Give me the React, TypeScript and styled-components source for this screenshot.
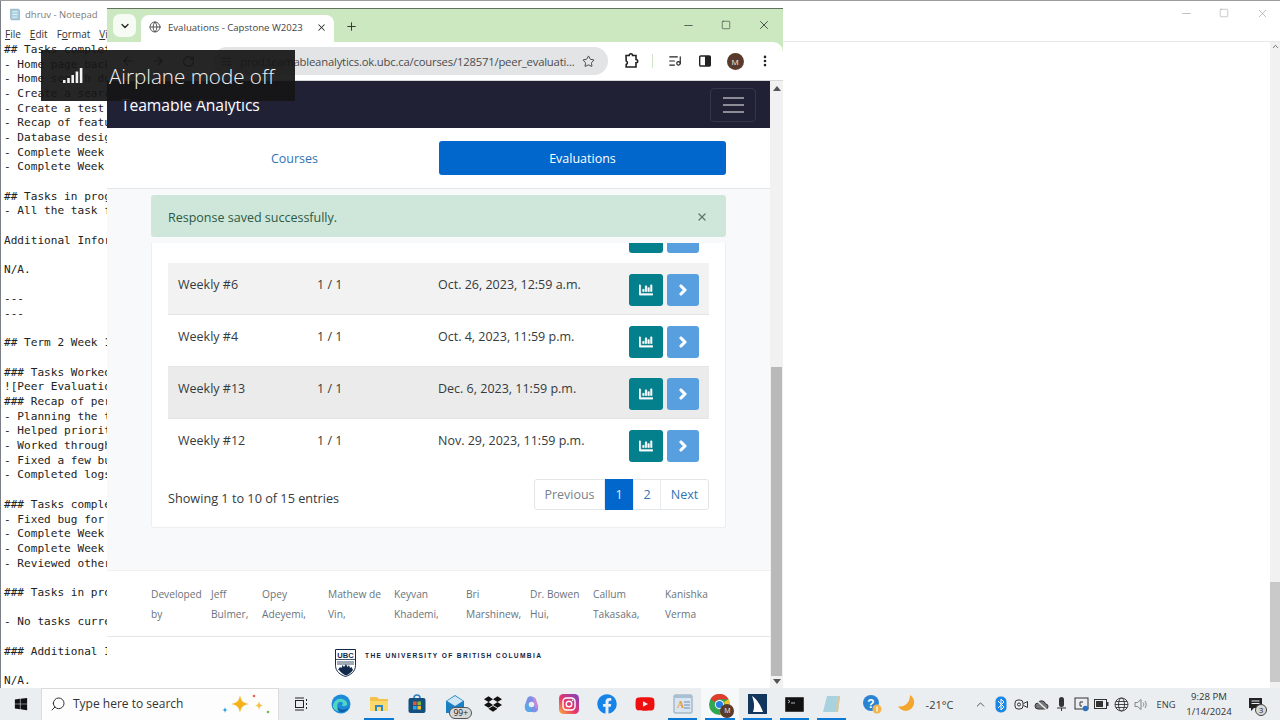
import styled, { createGlobalStyle } from "styled-components"
import { ChevronDown, X, Plus, Minus, Square, ArrowLeft, ArrowRight, RotateCw, Star, Globe, ListMusic, EllipsisVertical, SlidersHorizontal, Search, ChevronUp } from "lucide-react"
import { FaChartBar, FaChevronRight, FaWindows, FaDropbox, FaFacebook, FaYoutube } from "react-icons/fa"

const GlobalStyle = createGlobalStyle`
  html, body { margin: 0; padding: 0; background: #fff; }
  * { box-sizing: border-box; }
`

const Desktop = styled.div`
  position: relative;
  width: 1280px;
  height: 720px;
  overflow: hidden;
  background: #fff;
  border-top: 1px solid #9c9c9c;
  font-family: "Open Sans", "Noto Sans", sans-serif;
  display: flex;
  flex-direction: column;
`

const Windows = styled.div`
  position: relative;
  flex: 1;
`

/* notepad behind the browser */
const Notepad = styled.div`
  position: absolute;
  left: 0;
  top: 0;
  width: 130px;
  height: 687px;
  background: #fff;
  border-left: 1px solid #7a7f85;
  overflow: hidden;
`

const NoteTitle = styled.div`
  height: 26px;
  display: flex;
  align-items: center;
  gap: 3px;
  padding-left: 7px;
  font-size: 9.5px;
  color: #7b7b7b;
`

const NoteMenu = styled.div`
  height: 15px;
  display: flex;
  gap: 9px;
  padding-left: 4px;
  font-size: 10px;
  line-height: 15px;
  color: #333;
  u { text-decoration: underline; }
`

const NoteText = styled.pre`
  margin: 0;
  padding: 1px 0 0 3px;
  font-family: "DejaVu Sans Mono", monospace;
  font-size: 11.1px;
  line-height: 14.67px;
  color: #222;
`

const BlankWindow = styled.div`
  position: absolute;
  left: 783px;
  right: 0;
  top: 0;
  height: 687px;
  display: flex;
  flex-direction: column;
`

const BlankTop = styled.div`
  height: 41px;
  display: flex;
  justify-content: flex-end;
  align-items: flex-start;
  border-bottom: 1px solid #e8e8e8;
  color: #8a8a8a;
`

const BlankControls = styled.div`
  display: flex;
  margin-right: -1px;
`

const WinControl = styled.div<{ $w: number }>`
  width: ${(p) => p.$w}px;
  height: 24px;
  display: flex;
  align-items: center;
  justify-content: center;
  color: inherit;
`

const BlankBody = styled.div`
  flex: 1;
  display: flex;
  justify-content: flex-end;
`

const BlankTrack = styled.div`
  width: 10px;
  background: #f1f1f1;
  display: flex;
  flex-direction: column;
  justify-content: space-between;
  align-items: center;
`

const BlankThumb = styled.div`
  width: 10px;
  height: 100px;
  background: #c9c9c9;
  margin-bottom: 6px;
`

const Browser = styled.div`
  position: absolute;
  left: 107px;
  top: 7px;
  width: 676px;
  height: 680px;
  display: flex;
  flex-direction: column;
  border-top: 1px solid #66705f;
  background: #cbe8c0;
`

const TabStrip = styled.div`
  height: 33px;
  background: #cbe8c0;
  display: flex;
  align-items: flex-end;
  flex-shrink: 0;
`

const TabSearch = styled.div`
  width: 23px;
  height: 23px;
  margin: 0 5px 5px 6px;
  border-radius: 7px;
  background: #f6fbf3;
  display: flex;
  align-items: center;
  justify-content: center;
  color: #222;
`

const Tab = styled.div`
  width: 193px;
  height: 27px;
  background: #fff;
  border-radius: 8px 8px 0 0;
  display: flex;
  align-items: center;
  padding: 0 7px 3px 8px;
  gap: 7px;
  color: #444;
`

const TabTitle = styled.span`
  flex: 1;
  font-size: 9.6px;
  white-space: nowrap;
  color: #444;
`

const NewTab = styled.div`
  width: 34px;
  height: 27px;
  display: flex;
  align-items: center;
  justify-content: center;
  color: #333;
  padding-bottom: 5px;
`

const TabSpacer = styled.div`
  flex: 1;
`

const StripControls = styled.div`
  display: flex;
  margin-bottom: 5px;
  color: #222;
`

const Toolbar = styled.div`
  height: 39px;
  background: #fff;
  border-radius: 0 10px 0 0;
  display: flex;
  align-items: center;
  padding-left: 6px;
  border-bottom: 1px solid #d8d8d8;
  flex-shrink: 0;
  color: #555;
`

const NavIcon = styled.div<{ $w?: number }>`
  width: ${(p) => p.$w ?? 30}px;
  display: flex;
  justify-content: center;
  align-items: center;
  flex-shrink: 0;
  color: #333;
`

const Omnibox = styled.div`
  width: 395px;
  height: 28px;
  flex-shrink: 0;
  margin-left: 10px;
  border-radius: 14px;
  background: #e3e4e6;
  display: flex;
  align-items: center;
  padding: 0 13px 0 8px;
  color: #444;
`

const Url = styled.span`
  flex: 1;
  font-size: 11.3px;
  letter-spacing: -0.2px;
  white-space: nowrap;
  color: #4c4c4c;
  padding-left: 8px;
`

const Divider = styled.div`
  width: 1px;
  height: 14px;
  background: #cfe4c8;
  margin: 0 10px 0 -2px;
`

const Avatar = styled.div`
  width: 17px;
  height: 17px;
  border-radius: 50%;
  background: #5b3a2e;
  color: #eee;
  font-size: 8px;
  display: flex;
  align-items: center;
  justify-content: center;
`

const ChromeBadge = styled(Avatar)`
  position: absolute;
  right: -4px;
  bottom: -3px;
  width: 14px;
  height: 14px;
  font-size: 7px;
`

const ChromeWrap = styled.span`
  position: relative;
  display: flex;
`

const PageArea = styled.div`
  flex: 1;
  display: flex;
  min-height: 0;
  background: #fff;
`

const Page = styled.div`
  flex: 1;
  display: flex;
  flex-direction: column;
  min-width: 0;
  color: #343a40;
`

const Navbar = styled.div`
  height: 47px;
  background: #212136;
  flex-shrink: 0;
  display: flex;
  align-items: center;
  justify-content: space-between;
  padding: 0 14px;
`

const Brand = styled.div`
  font-size: 15.7px;
  color: #fff;
  letter-spacing: -0.1px;
`

const Toggler = styled.div`
  width: 46px;
  height: 34px;
  border: 1px solid #36364a;
  border-radius: 4px;
  display: flex;
  flex-direction: column;
  align-items: center;
  justify-content: center;
  gap: 5px;
`

const TogglerBar = styled.div`
  width: 21px;
  height: 2px;
  background: #8c8c97;
`

const NavTabs = styled.div`
  height: 61px;
  flex-shrink: 0;
  background: #fff;
  border-bottom: 1px solid #e5e5e5;
  display: flex;
  align-items: center;
  padding: 0 44px 1px 44px;
  gap: 1px;
`

const NavLink = styled.div<{ $active?: boolean }>`
  width: 287px;
  height: 34px;
  padding-top: 2px;
  border-radius: 3px;
  display: flex;
  align-items: center;
  justify-content: center;
  font-size: 12.5px;
  color: ${(p) => (p.$active ? "#fff" : "#2f74b5")};
  background: ${(p) => (p.$active ? "#0267cc" : "transparent")};
`

const Main = styled.div`
  flex: 1;
  min-height: 0;
  background: #f8f9fa;
  padding: 6px 44px 0 44px;
  display: flex;
  flex-direction: column;
`

const Alert = styled.div`
  height: 42px;
  flex-shrink: 0;
  background: #cfe6da;
  border-radius: 3px;
  display: flex;
  align-items: center;
  justify-content: space-between;
  padding: 2px 18px 0 17px;
  font-size: 12.5px;
  color: #2c5a45;
`

const AlertClose = styled.div`
  display: flex;
  color: #5d7a6c;
`

const Card = styled.div`
  margin-top: 6px;
  height: 285px;
  background: #fff;
  border: 1px solid #eeeeee;
  border-top: none;
  border-radius: 0 0 3px 3px;
  padding: 0 16px;
  display: flex;
  flex-direction: column;
`

const ClippedRow = styled.div`
  height: 20px;
  flex-shrink: 0;
  overflow: hidden;
  display: flex;
  justify-content: flex-end;
  padding-right: 10px;
  gap: 4px;
  align-items: flex-end;
  padding-bottom: 10px;
`

const Row = styled.div<{ $shade?: string; $last?: boolean }>`
  height: 52px;
  flex-shrink: 0;
  display: grid;
  grid-template-columns: 139px 121px 1fr auto;
  align-items: start;
  padding: 11px 10px 0 10px;
  background: ${(p) => p.$shade ?? "#fff"};
  border-bottom: 1px solid ${(p) => (p.$last ? "transparent" : "#e4e4e4")};
  font-size: 12.5px;
  line-height: 20px;
`

const Cell = styled.span`
  padding-top: 1px;
`

const RowButtons = styled.div`
  display: flex;
  gap: 4px;
`

const IconButton = styled.div<{ $kind: "chart" | "go" }>`
  width: ${(p) => (p.$kind === "chart" ? 34 : 32)}px;
  height: 32px;
  flex-shrink: 0;
  border-radius: 3px;
  background: ${(p) => (p.$kind === "chart" ? "#047f8c" : "#589fe0")};
  color: #fff;
  display: flex;
  align-items: center;
  justify-content: center;
`

const CardFoot = styled.div`
  flex: 1;
  display: flex;
  justify-content: space-between;
  align-items: flex-start;
  padding-top: 8px;
`

const Showing = styled.div`
  font-size: 12.7px;
  line-height: 20px;
  padding-top: 9px;
`

const Pager = styled.div`
  display: flex;
  height: 31px;
  border: 1px solid #e3e6e9;
  border-radius: 3px;
  font-size: 12.5px;
`

const PageItem = styled.div<{ $w: number; $active?: boolean; $muted?: boolean }>`
  width: ${(p) => p.$w}px;
  display: flex;
  align-items: center;
  justify-content: center;
  border-left: 1px solid #e9ecef;
  margin-top: ${(p) => (p.$active ? "-1px" : "0")};
  margin-bottom: ${(p) => (p.$active ? "-1px" : "0")};
  color: ${(p) => (p.$active ? "#e8f0fa" : p.$muted ? "#7a8188" : "#2f74b5")};
  background: ${(p) => (p.$active ? "#0267cc" : "transparent")};
  &:first-child { border-left: none; }
`

const Footer = styled.div`
  height: 118px;
  flex-shrink: 0;
  background: #fff;
  border-top: 1px solid #f0f0f0;
  display: flex;
  flex-direction: column;
`

const Credits = styled.div`
  height: 66px;
  flex-shrink: 0;
  border-bottom: 1px solid #e6e6e6;
  padding: 13px 0 0 44px;
  display: grid;
  grid-template-columns: 60px 51px 66px 66px 72px 64px 63px 72px 72px;
  font-size: 10.2px;
  line-height: 20px;
  color: #6a737b;
`

const UbcRow = styled.div`
  display: flex;
  align-items: flex-start;
  padding: 12px 0 0 228px;
  gap: 9px;
`

const UbcName = styled.div`
  font-family: "Liberation Sans", sans-serif;
  font-size: 6.6px;
  line-height: 11px;
  padding-top: 1px;
  font-weight: 700;
  letter-spacing: 1.36px;
  color: #14233f;
  white-space: nowrap;
`

const ScrollBar = styled.div`
  width: 13px;
  flex-shrink: 0;
  background: #f1f1f1;
  display: flex;
  flex-direction: column;
  align-items: center;
`

const ScrollArrow = styled.div<{ $down?: boolean }>`
  width: 0;
  height: 0;
  border-left: 4px solid transparent;
  border-right: 4px solid transparent;
  ${(p) => (p.$down ? "border-top: 5px solid #555;" : "border-bottom: 5px solid #555;")}
  margin: ${(p) => (p.$down ? "3px 0 0" : "5px 0 0")};
`

const ScrollThumb = styled.div`
  width: 11px;
  height: 309px;
  margin-top: 276px;
  background: #b9b9b9;
`

/* airplane mode flyout, sits over the windows */
const Flyout = styled.div`
  position: absolute;
  left: 41px;
  top: 49px;
  width: 254px;
  height: 51px;
  background: rgba(22, 22, 22, 0.93);
  display: flex;
  align-items: center;
  gap: 26px;
  padding-left: 22px;
  color: #f2f2f2;
  font-size: 20.6px;
  font-weight: 300;
`

const Taskbar = styled.div`
  height: 32px;
  flex-shrink: 0;
  background: #eaeef1;
  display: flex;
  align-items: stretch;
`

const StartButton = styled.div`
  width: 41px;
  display: flex;
  align-items: center;
  justify-content: center;
  color: #111;
`

const SearchBox = styled.div`
  width: 238px;
  padding: 0 0 2px 8px;
  background: #fdfdfd;
  border: 1px solid #dcdcdc;
  border-bottom: none;
  display: flex;
  align-items: center;
  gap: 7px;
  font-size: 12px;
  color: #333;
  position: relative;
`

const Sparkles = styled.svg`
  position: absolute;
  right: 8px;
  top: 4px;
`

const TaskSlot = styled.div<{ $w?: number; $running?: boolean; $active?: boolean }>`
  width: ${(p) => p.$w ?? 38}px;
  flex-shrink: 0;
  position: relative;
  display: flex;
  align-items: center;
  justify-content: center;
  background: ${(p) => (p.$active ? "#f6f8f9" : "transparent")};
  &::after {
    content: "";
    display: ${(p) => (p.$running ? "block" : "none")};
    position: absolute;
    left: 4px;
    right: 4px;
    bottom: 0;
    height: 2px;
    background: #0a78d4;
  }
`

const Badge = styled.span`
  position: absolute;
  right: 2px;
  bottom: 1px;
  height: 12px;
  padding: 0 3px;
  border-radius: 6px;
  background: #d8d8d8;
  border: 1px solid #555;
  font-size: 8.5px;
  line-height: 10px;
  color: #222;
`

const Tray = styled.div`
  margin-left: auto;
  display: flex;
  align-items: stretch;
  color: #333;
`

const TrayText = styled.div<{ $w: number; $size?: number; $after?: number }>`
  width: ${(p) => p.$w}px;
  margin-right: ${(p) => p.$after ?? 0}px;
  display: flex;
  align-items: center;
  justify-content: center;
  font-size: ${(p) => p.$size ?? 11}px;
  color: #3a3a3a;
  white-space: nowrap;
`

const Clock = styled.div`
  width: 56px;
  margin-right: 3px;
  display: flex;
  flex-direction: column;
  align-items: center;
  justify-content: center;
  font-size: 9.6px;
  line-height: 15px;
  color: #333;
`

const NotifyCount = styled.span`
  position: absolute;
  left: 15px;
  bottom: 4px;
  width: 12px;
  height: 12px;
  border-radius: 50%;
  background: #d8d8d8;
  border: 1px solid #444;
  font-size: 8px;
  line-height: 10px;
  text-align: center;
  color: #222;
`

const noteLines = [
  "## Tasks completed",
  "- Home page backend",
  "- Home search done",
  "- Create a search",
  "- Create a test",
  "- Recap of features",
  "- Database design",
  "- Complete Week 1",
  "- Complete Week 2",
  "",
  "## Tasks in progress",
  "- All the task for",
  "",
  "Additional Information",
  "",
  "N/A.",
  "",
  "---",
  "---",
  "",
  "## Term 2 Week 1",
  "",
  "### Tasks Worked",
  "![Peer Evaluation",
  "### Recap of period",
  "- Planning the tasks",
  "- Helped prioritize",
  "- Worked through",
  "- Fixed a few bugs",
  "- Completed logs",
  "",
  "### Tasks completed",
  "- Fixed bug for",
  "- Complete Week 1",
  "- Complete Week 2",
  "- Reviewed others",
  "",
  "### Tasks in progress",
  "",
  "- No tasks currently",
  "",
  "### Additional Info",
  "",
  "N/A.",
]

const rows = [
  { name: "Weekly #6", done: "1 / 1", due: "Oct. 26, 2023, 12:59 a.m.", shade: "#f2f2f2" },
  { name: "Weekly #4", done: "1 / 1", due: "Oct. 4, 2023, 11:59 p.m." },
  { name: "Weekly #13", done: "1 / 1", due: "Dec. 6, 2023, 11:59 p.m.", shade: "#ebebeb" },
  { name: "Weekly #12", done: "1 / 1", due: "Nov. 29, 2023, 11:59 p.m." },
]

const credits = ["Developed by", "Jeff Bulmer,", "Opey Adeyemi,", "Mathew de Vin,", "Keyvan Khademi,", "Bri Marshinew,", "Dr. Bowen Hui,", "Callum Takasaka,", "Kanishka Verma"]

function NotepadIcon() {
  return (
    <svg width="14" height="15" viewBox="0 0 16 16">
      <path d="M3 2h9l1 1v11H4l-1-1z" fill="#a9cfe0" stroke="#6f97a8" strokeWidth="0.7" />
      <path d="M5 5h6M5 8h6M5 11h5" stroke="#e9f4f8" strokeWidth="1" />
    </svg>
  )
}

function ExtensionIcon() {
  return (
    <svg width="16" height="16" viewBox="0 0 16 16" fill="none" stroke="#222" strokeWidth="1.6">
      <path d="M3 2.5h3.2a1.7 1.7 0 0 1 3.4 0H13v4a1.5 1.5 0 0 1 0 3.4V14H3.2v-2.6a1.8 1.8 0 0 0 0-3.4z" />
    </svg>
  )
}

function SidePanelIcon() {
  return (
    <svg width="14" height="14" viewBox="0 0 14 14">
      <rect x="1.7" y="2" width="10.6" height="10" rx="1" fill="#fff" stroke="#222" strokeWidth="1.4" />
      <rect x="7" y="2" width="5.3" height="10" fill="#222" />
    </svg>
  )
}

function SignalIcon() {
  return (
    <svg width="20" height="16" viewBox="0 0 20 16" fill="#f2f2f2">
      <rect x="0" y="12" width="2.6" height="3" />
      <rect x="4.2" y="10" width="2.6" height="5" />
      <rect x="8.4" y="7" width="2.6" height="8" />
      <rect x="12.6" y="3.5" width="2.6" height="11.5" />
      <rect x="16.8" y="0" width="2.6" height="15" />
    </svg>
  )
}

function UbcLogo() {
  return (
    <svg width="21" height="28" viewBox="0 0 21 28">
      <path d="M0.5 0.5h20v16c0 6-5 9.5-10 11c-5-1.500-10-5-10-11z" fill="#fff" stroke="#12294a" />
      <text x="10.5" y="8.5" textAnchor="middle" fontFamily="Liberation Sans" fontWeight="700" fontSize="7.6" fill="#12294a">UBC</text>
      <path d="M1 10.500h19M2 13h17M2 15h17" stroke="#12294a" strokeWidth="0.8" />
      <path d="M3 21l2-3 1.500 1 1-3 1.500 2 2-3 1.500 3 1.500-2 1 3 1.500-1 1.500 3c-2 3-5 4.500-7 5.500c-2-1-5-2.500-7-5.500z" fill="#12294a" />
    </svg>
  )
}

function TaskViewIcon() {
  return (
    <svg width="16" height="16" viewBox="0 0 16 16" fill="none" stroke="#222" strokeWidth="1">
      <rect x="2.5" y="4.5" width="8" height="7" />
      <path d="M2 2h9M2 14h9M13.5 3v2M13.500 7v2M13.500 11v2" />
    </svg>
  )
}

function EdgeIcon() {
  return (
    <svg width="20" height="20" viewBox="0 0 20 20">
      <circle cx="10" cy="10" r="9.5" fill="#1c8bd8" />
      <path d="M2 13c0-6 5-9 9-8c4 1 6 4 5 6c-1 1.500-5 1.500-5.500 0c3 0 1-4-2-3c-3 1-3 6 0 8.500c2 1.500-5 1-6.500-3.500z" fill="#50d6c0" />
      <path d="M18 13c-2 4-6 6-9 5c-2-1-3-3-2-5c1 3 7 4 11 0z" fill="#0f5ea8" />
    </svg>
  )
}

function FolderIcon() {
  return (
    <svg width="20" height="18" viewBox="0 0 20 18">
      <path d="M1 2h7l2 2h9v12H1z" fill="#f2c14e" />
      <path d="M1 6h18v10H1z" fill="#fbd96b" />
      <rect x="6" y="10" width="8" height="6" fill="#2f88c9" />
      <rect x="8" y="12" width="4" height="4" fill="#fbd96b" />
    </svg>
  )
}

function StoreIcon() {
  return (
    <svg width="18" height="20" viewBox="0 0 18 20">
      <path d="M6 4a3 3 0 0 1 6 0" fill="none" stroke="#2a7fbf" strokeWidth="1.5" />
      <rect x="0.5" y="4" width="17" height="15" rx="2" fill="#14507e" />
      <rect x="5" y="7.5" width="3.6" height="3.6" fill="#e8543a" />
      <rect x="9.4" y="7.5" width="3.6" height="3.6" fill="#7cbb3e" />
      <rect x="5" y="11.9" width="3.6" height="3.6" fill="#2aa5e8" />
      <rect x="9.4" y="11.9" width="3.6" height="3.6" fill="#f5bb27" />
    </svg>
  )
}

function MailIcon() {
  return (
    <svg width="22" height="20" viewBox="0 0 22 20">
      <path d="M2 7l9-6 9 6v12H2z" fill="#1a80c4" />
      <path d="M3 7l8 5 8-5-8-5z" fill="#cfe6f5" />
    </svg>
  )
}

function CopilotIcon() {
  return (
    <svg width="19" height="19" viewBox="0 0 18 18">
      <path d="M5 3c2-3 6-2 7 1l3 8c1 3-2 5-5 4H7C3 16 2 12 3 9z" fill="#7f8fe6" />
      <path d="M10 2c2 0 3 1 3.5 3l2 6c0 2-2 2-3 1z" fill="#c48ad8" />
      <path d="M4 8c2-1 3 0 4 3l1 5H6c-3-1-4-5-2-8z" fill="#5aa8e8" />
      <circle cx="9" cy="9" r="2.6" fill="#eaeef1" />
    </svg>
  )
}

function InstagramIcon() {
  return (
    <svg width="20" height="20" viewBox="0 0 20 20">
      <defs>
        <linearGradient id="insta" x1="0" y1="1" x2="1" y2="0">
          <stop offset="0" stopColor="#f9b13a" />
          <stop offset="0.45" stopColor="#e8356b" />
          <stop offset="1" stopColor="#7b3fc4" />
        </linearGradient>
      </defs>
      <rect width="20" height="20" rx="4.5" fill="url(#insta)" />
      <rect x="4" y="4" width="12" height="12" rx="3.5" fill="none" stroke="#fff" strokeWidth="1.4" />
      <circle cx="10" cy="10" r="2.8" fill="none" stroke="#fff" strokeWidth="1.4" />
      <circle cx="13.6" cy="6.4" r="0.8" fill="#fff" />
    </svg>
  )
}

function DocIcon() {
  return (
    <svg width="20" height="20" viewBox="0 0 20 20">
      <rect x="1" y="1" width="18" height="18" rx="1" fill="#d9e5f0" stroke="#8aa0b6" />
      <rect x="1" y="1" width="18" height="3" fill="#a9bfd4" />
      <text x="4" y="14" fontFamily="Liberation Serif" fontSize="10" fontWeight="700" fill="#e89a3c">A</text>
      <path d="M11 8h6M11 11h6M11 14h6" stroke="#6a90b8" />
    </svg>
  )
}

function ChromeIcon() {
  return (
    <ChromeWrap>
      <svg width="21" height="21" viewBox="0 0 20 20">
        <circle cx="10" cy="10" r="10" fill="#2fa84f" />
        <path d="M10 0a10 10 0 0 1 8.660 5H10a5 5 0 0 0-4.330 2.500L1.340 5A10 10 0 0 1 10 0z" fill="#e33b2e" />
        <path d="M18.660 5A10 10 0 0 1 10 20l4.330-7.500A5 5 0 0 0 14.330 7.500z" fill="#fbc02d" />
        <circle cx="10" cy="10" r="4.4" fill="#fff" />
        <circle cx="10" cy="10" r="3.4" fill="#2a7de1" />
      </svg>
      <ChromeBadge>M</ChromeBadge>
    </ChromeWrap>
  )
}

function SharkIcon() {
  return (
    <svg width="19" height="20" viewBox="0 0 19 20">
      <rect width="19" height="20" fill="#12365e" />
      <path d="M4 2c5 3 9 10 11 16H5c2-5 1-11-1-16z" fill="#fff" />
    </svg>
  )
}

function TerminalIcon() {
  return (
    <svg width="19" height="15" viewBox="0 0 19 15">
      <rect width="19" height="15" rx="1" fill="#111" stroke="#777" />
      <path d="M3 3l2 1.500L3 6M6 6h4" stroke="#ddd" fill="none" strokeWidth="0.8" />
    </svg>
  )
}

function NotesIcon() {
  return (
    <svg width="20" height="20" viewBox="0 0 20 20">
      <path d="M5 2h13l-2 16H1z" fill="#a8d2dd" />
      <path d="M15 3l3-1-2 16-2 0z" fill="#d7c9a0" />
    </svg>
  )
}

function Sparkle() {
  return (
    <Sparkles width="48" height="24" viewBox="0 0 48 24">
      <path d="M18 2c1 6 3 8 9 9c-6 1-8 3-9 9c-1-6-3-8-9-9c6-1 8-3 9-9z" fill="#f6b21b" />
      <path d="M37 8c.5 3 1.500 4 4 4.500c-2.500.5-3.500 1.500-4 4.500c-.5-3-1.500-4-4-4.500c2.500-.5 3.500-1.500 4-4.500z" fill="#f6c24a" />
      <path d="M3 14c.3 2 1 2.700 3 3c-2 .3-2.700 1-3 3c-.3-2-1-2.700-3-3c2-.3 2.700-1 3-3z" fill="#2d9fe0" />
      <circle cx="32" cy="3" r="1.3" fill="#e2664c" />
      <circle cx="46" cy="19" r="1.3" fill="#76b947" />
    </Sparkles>
  )
}

function HelpIcon() {
  return (
    <svg width="20" height="20" viewBox="0 0 20 20">
      <circle cx="9" cy="9" r="8" fill="#2a84d2" />
      <text x="9" y="13.5" textAnchor="middle" fontFamily="Liberation Sans" fontWeight="700" fontSize="12" fill="#fff">?</text>
      <circle cx="15" cy="15" r="4.5" fill="#f1b44c" />
      <rect x="14.4" y="12.5" width="1.2" height="5" fill="#fff" />
    </svg>
  )
}

function MoonIcon() {
  return (
    <svg width="20" height="20" viewBox="0 0 20 20">
      <path d="M13 1a8.500 8.500 0 1 1-12 11c5 2 12-2 12-11z" fill="#f3a52c" />
    </svg>
  )
}

function BluetoothIcon() {
  return (
    <svg width="12" height="17" viewBox="0 0 12 17">
      <rect x="0.5" y="0.5" width="11" height="16" rx="5" fill="#1c86e5" />
      <path d="M3 5l6 6-3 3V3l3 3-6 6" fill="none" stroke="#fff" strokeWidth="1" />
    </svg>
  )
}

function TrayCamera() {
  return (
    <svg width="15" height="15" viewBox="0 0 15 15" fill="none" stroke="#333" strokeWidth="1">
      <rect x="1" y="3" width="8" height="9" rx="3" />
      <circle cx="5" cy="7.5" r="1.5" />
      <path d="M9.5 6.5l4-2v6l-4-2" />
    </svg>
  )
}

function TrayCloud() {
  return (
    <svg width="15" height="15" viewBox="0 0 15 15" fill="#777" stroke="#333" strokeWidth="1">
      <path d="M4 12a3 3 0 0 1 0-6a4 4 0 0 1 7.500 1a2.500 2.500 0 0 1 0 5z" />
      <path d="M2 3l11 10" stroke="#eaeef1" strokeWidth="1.5" />
    </svg>
  )
}

function TrayMic() {
  return (
    <svg width="13" height="16" viewBox="0 0 13 16">
      <rect x="4" y="1" width="5" height="10" rx="2.5" fill="#333" />
      <path d="M2 12h9M6.500 12v3" stroke="#333" />
    </svg>
  )
}

function TrayNetwork() {
  return (
    <svg width="15" height="15" viewBox="0 0 15 15" fill="none" stroke="#333">
      <rect x="1" y="1" width="13" height="11" />
      <path d="M9 5H6v4h2" />
      <circle cx="11.5" cy="11.5" r="2.8" fill="#2b72c4" stroke="none" />
    </svg>
  )
}

function TrayBattery() {
  return (
    <svg width="15" height="12" viewBox="0 0 15 12">
      <rect x="0.5" y="1.5" width="12" height="9" fill="none" stroke="#333" />
      <rect x="2" y="3" width="7" height="6" fill="#333" />
      <rect x="13" y="4" width="1.5" height="4" fill="#333" />
    </svg>
  )
}

function TrayGlobe() {
  return (
    <svg width="15" height="15" viewBox="0 0 15 15" fill="none" stroke="#333" strokeWidth="0.9">
      <circle cx="7.5" cy="7.5" r="6.5" />
      <ellipse cx="7.5" cy="7.5" rx="3" ry="6.5" />
      <path d="M1 7.500h13M2 4.500h11M2 10.500h11" />
    </svg>
  )
}

function TrayVolume() {
  return (
    <svg width="15" height="13" viewBox="0 0 15 13" fill="none" stroke="#777" strokeWidth="0.9">
      <path d="M1 4.500h2.500L7 1.500v10l-3.500-3H1z" />
      <path d="M9 4.500c1 1 1 3 0 4M11 3c1.500 2 1.500 5 0 7" />
    </svg>
  )
}

function NotifyIcon() {
  return (
    <svg width="15" height="15" viewBox="0 0 15 15">
      <path d="M1 1h13v10H6l-3 3v-3H1z" fill="#222" />
      <path d="M3.500 4h8M3.500 6.500h8" stroke="#eaeef1" />
    </svg>
  )
}

export default function App() {
  return (
    <Desktop>
      <GlobalStyle />
      <Windows>
        <Notepad>
          <NoteTitle>
            <NotepadIcon />
            dhruv - Notepad
          </NoteTitle>
          <NoteMenu>
            <span><u>F</u>ile</span>
            <span><u>E</u>dit</span>
            <span>F<u>o</u>rmat</span>
            <span><u>V</u>iew</span>
          </NoteMenu>
          <NoteText>{noteLines.join("\n")}</NoteText>
        </Notepad>

        <BlankWindow>
          <BlankTop>
            <BlankControls>
              <WinControl $w={38}><Minus size={13} strokeWidth={1} /></WinControl>
              <WinControl $w={38}><Square size={10} strokeWidth={1.1} /></WinControl>
              <WinControl $w={38}><X size={13} strokeWidth={1} /></WinControl>
            </BlankControls>
          </BlankTop>
          <BlankBody>
            <BlankTrack>
              <ChevronUp size={9} strokeWidth={2} color="#444" />
              <BlankThumb />
            </BlankTrack>
          </BlankBody>
        </BlankWindow>

        <Browser>
          <TabStrip>
            <TabSearch><ChevronDown size={12} strokeWidth={2.5} /></TabSearch>
            <Tab>
              <Globe size={12} strokeWidth={2} color="#555" />
              <TabTitle>Evaluations - Capstone W2023</TabTitle>
              <X size={11} strokeWidth={2.2} color="#333" />
            </Tab>
            <NewTab><Plus size={13} strokeWidth={1.8} /></NewTab>
            <TabSpacer />
            <StripControls>
              <WinControl $w={38}><Minus size={13} strokeWidth={1.2} /></WinControl>
              <WinControl $w={38}><Square size={10} strokeWidth={1.3} /></WinControl>
              <WinControl $w={38}><X size={14} strokeWidth={1.3} /></WinControl>
            </StripControls>
          </TabStrip>
          <Toolbar>
            <NavIcon $w={30}><ArrowLeft size={14} /></NavIcon>
            <NavIcon $w={30}><ArrowRight size={14} /></NavIcon>
            <NavIcon $w={30}><RotateCw size={13} /></NavIcon>
            <Omnibox>
              <SlidersHorizontal size={11} />
              <Url>prod.teamableanalytics.ok.ubc.ca/courses/128571/peer_evaluati...</Url>
              <Star size={13} strokeWidth={1.8} />
            </Omnibox>
            <NavIcon $w={46}><ExtensionIcon /></NavIcon>
            <Divider />
            <NavIcon $w={24}><ListMusic size={14} strokeWidth={2} color="#222" /></NavIcon>
            <NavIcon $w={36}><SidePanelIcon /></NavIcon>
            <NavIcon $w={24}><Avatar>M</Avatar></NavIcon>
            <NavIcon $w={36}><EllipsisVertical size={14} strokeWidth={2.5} color="#222" /></NavIcon>
          </Toolbar>
          <PageArea>
            <Page>
              <Navbar>
                <Brand>Teamable Analytics</Brand>
                <Toggler>
                  <TogglerBar />
                  <TogglerBar />
                  <TogglerBar />
                </Toggler>
              </Navbar>
              <NavTabs>
                <NavLink>Courses</NavLink>
                <NavLink $active>Evaluations</NavLink>
              </NavTabs>
              <Main>
                <Alert>
                  Response saved successfully.
                  <AlertClose><X size={12} strokeWidth={2.5} /></AlertClose>
                </Alert>
                <Card>
                  <ClippedRow>
                    <IconButton $kind="chart" />
                    <IconButton $kind="go" />
                  </ClippedRow>
                  {rows.map((row, i) => (
                    <Row key={row.name} $shade={row.shade} $last={i === rows.length - 1}>
                      <Cell>{row.name}</Cell>
                      <Cell>{row.done}</Cell>
                      <Cell>{row.due}</Cell>
                      <RowButtons>
                        <IconButton $kind="chart"><FaChartBar size={14} stroke="currentColor" strokeWidth={12} /></IconButton>
                        <IconButton $kind="go"><FaChevronRight size={12} stroke="currentColor" strokeWidth={50} /></IconButton>
                      </RowButtons>
                    </Row>
                  ))}
                  <CardFoot>
                    <Showing>Showing 1 to 10 of 15 entries</Showing>
                    <Pager>
                      <PageItem $w={69} $muted>Previous</PageItem>
                      <PageItem $w={29} $active>1</PageItem>
                      <PageItem $w={27}>2</PageItem>
                      <PageItem $w={48}>Next</PageItem>
                    </Pager>
                  </CardFoot>
                </Card>
              </Main>
              <Footer>
                <Credits>
                  {credits.map((name) => (
                    <span key={name}>{name}</span>
                  ))}
                </Credits>
                <UbcRow>
                  <UbcLogo />
                  <UbcName>THE UNIVERSITY OF BRITISH COLUMBIA</UbcName>
                </UbcRow>
              </Footer>
            </Page>
            <ScrollBar>
              <ScrollArrow />
              <ScrollThumb />
              <ScrollArrow $down />
            </ScrollBar>
          </PageArea>
        </Browser>

        <Flyout>
          <SignalIcon />
          Airplane mode off
        </Flyout>
      </Windows>

      <Taskbar>
        <StartButton><FaWindows size={14} /></StartButton>
        <SearchBox>
          <Search size={16} strokeWidth={1.5} style={{ transform: "scaleX(-1)" }} />
          Type here to search
          <Sparkle />
        </SearchBox>
        <TaskSlot $w={43}><TaskViewIcon /></TaskSlot>
        <TaskSlot><EdgeIcon /></TaskSlot>
        <TaskSlot $running><FolderIcon /></TaskSlot>
        <TaskSlot><StoreIcon /></TaskSlot>
        <TaskSlot><MailIcon /><Badge>99+</Badge></TaskSlot>
        <TaskSlot><FaDropbox size={18} color="#111" /></TaskSlot>
        <TaskSlot><CopilotIcon /></TaskSlot>
        <TaskSlot><InstagramIcon /></TaskSlot>
        <TaskSlot><FaFacebook size={20} color="#1583e8" /></TaskSlot>
        <TaskSlot><FaYoutube size={20} color="#ee0f0f" /></TaskSlot>
        <TaskSlot $w={37.3} $running><DocIcon /></TaskSlot>
        <TaskSlot $w={37.3} $running $active><ChromeIcon /></TaskSlot>
        <TaskSlot $w={37.3} $running><SharkIcon /></TaskSlot>
        <TaskSlot $w={37.3} $running><TerminalIcon /></TaskSlot>
        <TaskSlot $w={37.3} $running><NotesIcon /></TaskSlot>
        <Tray>
          <TaskSlot $w={36}><HelpIcon /></TaskSlot>
          <TaskSlot $w={34}><MoonIcon /></TaskSlot>
          <TrayText $w={31} $after={14}>-21°C</TrayText>
          <TaskSlot $w={22}><ChevronUp size={13} strokeWidth={1.5} /></TaskSlot>
          <TaskSlot $w={20}><BluetoothIcon /></TaskSlot>
          <TaskSlot $w={20}><TrayCamera /></TaskSlot>
          <TaskSlot $w={20}><TrayCloud /></TaskSlot>
          <TaskSlot $w={20}><TrayMic /></TaskSlot>
          <TaskSlot $w={20}><TrayNetwork /></TaskSlot>
          <TaskSlot $w={20}><TrayBattery /></TaskSlot>
          <TaskSlot $w={20}><TrayGlobe /></TaskSlot>
          <TaskSlot $w={20}><TrayVolume /></TaskSlot>
          <TrayText $w={30} $size={9.4}>ENG</TrayText>
          <Clock><span>9:28 PM</span><span>1/14/2024</span></Clock>
          <TaskSlot $w={30}><NotifyIcon /><NotifyCount>3</NotifyCount></TaskSlot>
          <TaskSlot $w={10} />
        </Tray>
      </Taskbar>
    </Desktop>
  )
}
